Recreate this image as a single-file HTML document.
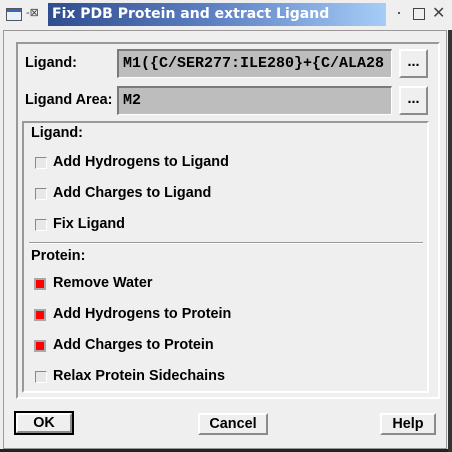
<!DOCTYPE html><html><head><style>
body{margin:0;width:452px;height:452px;background:#efefef;position:relative;overflow:hidden;font-family:"Liberation Sans",sans-serif;font-size:14.4px;font-weight:bold;color:#000}
.a{position:absolute}
.tb{left:48px;top:3px;width:338px;height:23px;background:linear-gradient(90deg,#2f4d8e,#5e82c4 50%,#a6cdf7);color:#fff;font-family:"DejaVu Sans",sans-serif;font-weight:bold;font-size:14px;line-height:23px;padding-left:4px;box-sizing:border-box}
.field{background:#bdbdbd;border-top:2px solid #7a7a7a;border-left:2px solid #7a7a7a;border-bottom:1px solid #fff;border-right:1px solid #fff;box-sizing:border-box;font-family:"Liberation Mono","DejaVu Sans Mono",monospace;font-weight:bold;font-size:15px;line-height:26px;padding-left:4px;white-space:nowrap;overflow:hidden}
.btn{border:2px solid;border-color:#fff #8a8a8a #8a8a8a #fff;box-sizing:border-box;text-align:center;background:#efefef}
.cb{width:10px;height:10px;border:1px solid;border-color:#8a8a8a #fff #fff #8a8a8a;background:#e8e8e8}
.cb.on{background:#f00;border:2px solid #a8a8a8;width:8px;height:8px}
.lbl{left:53px}
</style></head><body>
<div class="a" style="left:0;top:0;width:452px;height:29px;background:#efefef"></div>
<div class="a" style="left:6px;top:8px;width:14px;height:11px;border:1px solid #555;background:linear-gradient(#3a66b8 3px,#e8f0fa 3px)"></div>
<div class="a" style="left:26px;top:6px;font-size:11px;color:#444;font-weight:normal">-⊠</div>
<div class="a tb">Fix PDB Protein and extract Ligand</div>
<div class="a" style="left:398px;top:12px;width:2px;height:2px;background:#555"></div>
<div class="a" style="left:413px;top:8px;width:10px;height:10px;border:1px solid #444"></div>
<div class="a" style="left:432px;top:3px;font-size:16px;color:#444;font-weight:normal">✕</div>
<div class="a" style="left:3px;top:30px;width:444px;height:419px;border:1px solid #999;box-sizing:border-box"></div>
<div class="a" style="left:0;top:449px;width:452px;height:3px;background:#222"></div>
<div class="a" style="left:448px;top:30px;width:4px;height:422px;background:#333"></div>
<div class="a" style="left:16px;top:42px;width:424px;height:357px;border:2px solid;border-color:#999 #fff #fff #999;box-sizing:border-box"></div>
<div class="a" style="left:25px;top:55px">Ligand:</div>
<div class="a field" style="left:117px;top:49px;width:275px;height:29px">M1({C/SER277:ILE280}+{C/ALA28</div>
<div class="a btn" style="left:399px;top:49px;width:29px;height:29px;line-height:22px">...</div>
<div class="a" style="left:25px;top:92px">Ligand Area:</div>
<div class="a field" style="left:117px;top:86px;width:275px;height:29px">M2</div>
<div class="a btn" style="left:399px;top:86px;width:29px;height:29px;line-height:22px">...</div>
<div class="a" style="left:22px;top:121px;width:407px;height:272px;border:2px solid;border-color:#999 #fff #fff #999;box-sizing:border-box"></div>
<div class="a" style="left:31px;top:125px">Ligand:</div>
<div class="a cb" style="left:35px;top:157px"></div><div class="a lbl" style="top:154px">Add Hydrogens to Ligand</div>
<div class="a cb" style="left:35px;top:188px"></div><div class="a lbl" style="top:185px">Add Charges to Ligand</div>
<div class="a cb" style="left:35px;top:219px"></div><div class="a lbl" style="top:216px">Fix Ligand</div>
<div class="a" style="left:29px;top:242px;width:394px;height:1px;background:#999;border-bottom:1px solid #fff"></div>
<div class="a" style="left:31px;top:248px">Protein:</div>
<div class="a cb on" style="left:34px;top:278px"></div><div class="a lbl" style="top:275px">Remove Water</div>
<div class="a cb on" style="left:34px;top:309px"></div><div class="a lbl" style="top:306px">Add Hydrogens to Protein</div>
<div class="a cb on" style="left:34px;top:340px"></div><div class="a lbl" style="top:337px">Add Charges to Protein</div>
<div class="a cb" style="left:35px;top:371px"></div><div class="a lbl" style="top:368px">Relax Protein Sidechains</div>
<div class="a" style="left:14px;top:411px;width:60px;height:24px;border:2px solid #000;box-sizing:border-box"></div>
<div class="a btn" style="left:16px;top:413px;width:56px;height:20px;line-height:16px">OK</div>
<div class="a btn" style="left:198px;top:413px;width:70px;height:22px;line-height:18px">Cancel</div>
<div class="a btn" style="left:380px;top:413px;width:56px;height:22px;line-height:18px">Help</div>
</body></html>
